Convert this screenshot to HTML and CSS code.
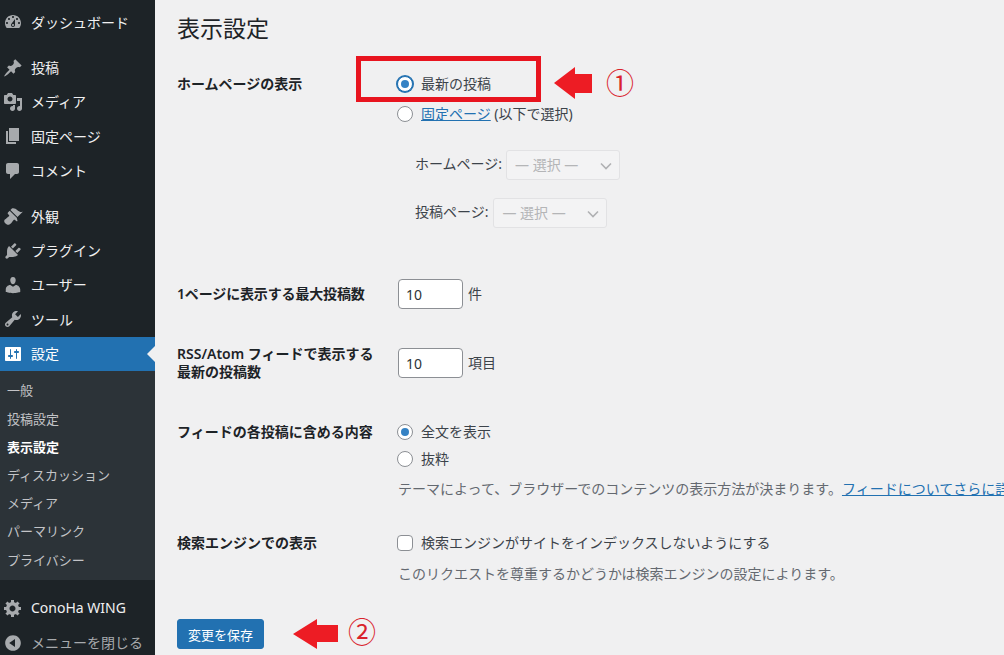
FILE: index.html
```html
<!DOCTYPE html>
<html lang="ja">
<head>
<meta charset="utf-8">
<title>表示設定</title>
<link rel="stylesheet" href="styles.css">
</head>
<body>
<div class="page">
  <nav class="side">
    <ul class="menu first">
      <li><svg viewBox="0 0 20 20"><path d="M3.76 16h12.48c1.1-1.37 1.76-3.11 1.76-5 0-4.42-3.58-8-8-8s-8 3.58-8 8c0 1.89.66 3.63 1.76 5zM10 4c.55 0 1 .45 1 1s-.45 1-1 1-1-.45-1-1 .45-1 1-1zM6 6c.55 0 1 .45 1 1s-.45 1-1 1-1-.45-1-1 .45-1 1-1zm8 0c.55 0 1 .45 1 1s-.45 1-1 1-1-.45-1-1 .45-1 1-1zm-5.37 5.55L12 7v6c0 1.1-.9 2-2 2s-2-.9-2-2c0-.57.24-1.08.63-1.45zM4 10c.55 0 1 .45 1 1s-.45 1-1 1-1-.45-1-1 .45-1 1-1zm12 0c.55 0 1 .45 1 1s-.45 1-1 1-1-.45-1-1 .45-1 1-1zm-5 3c0-.55-.45-1-1-1s-1 .45-1 1 .45 1 1 1 1-.45 1-1z"/></svg><span>ダッシュボード</span></li>
    </ul>
    <ul class="menu">
      <li><svg viewBox="0 0 20 20"><path d="M10.44 3.02l1.82-1.82 6.36 6.35-1.83 1.82c-1.05-.68-2.48-.57-3.41.36l-.75.75c-.92.93-1.04 2.35-.35 3.41l-1.83 1.82-2.41-2.41-2.8 2.79c-.42.42-3.38 2.71-3.8 2.29s1.86-3.39 2.28-3.81l2.79-2.79L4.1 9.36l1.83-1.82c1.05.69 2.48.57 3.4-.36l.75-.75c.93-.92 1.05-2.35.36-3.41z"/></svg><span>投稿</span></li>
      <li><svg viewBox="0 0 20 20"><path d="M13 11V4c0-.55-.45-1-1-1h-1.67L9 1H5L3.67 3H2c-.55 0-1 .45-1 1v7c0 .55.45 1 1 1h10c.55 0 1-.45 1-1zM7 4.5c1.38 0 2.5 1.12 2.5 2.5S8.38 9.5 7 9.5 4.5 8.38 4.5 7 5.62 4.5 7 4.5zM14 6h5v10.5c0 1.38-1.12 2.5-2.5 2.5S14 17.88 14 16.5s1.12-2.5 2.5-2.5c.17 0 .34.02.5.05V9h-3V6zm-4 8.05V13h2v3.5c0 1.38-1.12 2.5-2.5 2.5S7 17.88 7 16.5 8.12 14 9.5 14c.17 0 .34.02.5.05z"/></svg><span>メディア</span></li>
      <li><svg viewBox="0 0 20 20"><path d="M6 15V2h10v13H6zm-1 1h8v2H3V5h2v11z"/></svg><span>固定ページ</span></li>
      <li><svg viewBox="0 0 20 20"><path d="M5 2h9c1.1 0 2 .9 2 2v7c0 1.1-.9 2-2 2h-2l-5 5v-5H5c-1.1 0-2-.9-2-2V4c0-1.1.9-2 2-2z"/></svg><span>コメント</span></li>
    </ul>
    <ul class="menu">
      <li><svg viewBox="0 0 20 20"><path d="M14.48 11.06L7.41 3.99l1.5-1.5c.5-.56 2.3-.47 3.51.32 1.21.8 1.43 1.28 2.91 2.1 1.18.64 2.45 1.26 4.45.85zm-.71.71L6.7 4.7 4.93 6.47c-.39.39-.39 1.02 0 1.41l1.06 1.06c.39.39.39 1.03 0 1.42-.6.6-1.43 1.11-2.21 1.69-.35.26-.7.53-1.01.84C1.43 13.23.28 15.09 2.5 17.5c2.41 2.22 4.27 1.07 5.61-.27.31-.31.58-.66.84-1.01.58-.78 1.09-1.61 1.69-2.21.39-.39 1.03-.39 1.42 0l1.06 1.06c.39.39 1.02.39 1.41 0z"/></svg><span>外観</span></li>
      <li><svg viewBox="0 0 20 20"><path d="M13.11 4.36L9.87 7.6 8 5.73l3.24-3.24c.35-.34 1.05-.2 1.56.32.52.51.66 1.21.31 1.55zm-8 1.77l.91-1.12 9.01 9.01-1.19.84c-.71.71-2.63 1.16-3.82 1.16H6.14L4.9 17.26c-.59.59-1.54.59-2.12 0-.59-.58-.59-1.53 0-2.12l1.24-1.24v-3.88c0-1.13.4-3.19 1.09-3.89zm7.26 3.97l3.24-3.24c.34-.35 1.04-.21 1.55.31.52.51.66 1.21.31 1.55l-3.24 3.25z"/></svg><span>プラグイン</span></li>
      <li><svg viewBox="0 0 20 20"><path d="M10 9.25c-2.27 0-2.73-3.44-2.73-3.44C7 4.02 7.82 2 9.97 2c2.16 0 2.98 2.02 2.71 3.81 0 0-.41 3.44-2.68 3.44zm0 2.57L12.72 10c2.39 0 4.52 2.33 4.52 4.53v2.49s-3.65 1.13-7.24 1.13c-3.65 0-7.24-1.13-7.24-1.13v-2.49c0-2.25 1.94-4.48 4.47-4.48z"/></svg><span>ユーザー</span></li>
      <li><svg viewBox="0 0 20 20"><path d="M16.68 9.77c-1.34 1.34-3.3 1.67-4.95.99l-5.41 6.52c-.99.99-2.59.99-3.58 0s-.99-2.59 0-3.57l6.52-5.42c-.68-1.65-.35-3.61.99-4.95 1.28-1.28 3.12-1.62 4.72-1.06l-2.89 2.89 2.82 2.82 2.86-2.87c.53 1.58.18 3.39-1.08 4.65zM3.81 16.21c.4.39 1.04.39 1.43 0 .4-.4.4-1.04 0-1.43-.39-.4-1.03-.4-1.43 0-.39.39-.39 1.03 0 1.43z"/></svg><span>ツール</span></li>
      <li class="active"><svg viewBox="0 0 20 20"><path d="M18 16V4c0-.55-.45-1-1-1H3c-.55 0-1 .45-1 1v12c0 .55.45 1 1 1h14c.55 0 1-.45 1-1zM8 11h1c.55 0 1 .45 1 1s-.45 1-1 1H8v1.5c0 .28-.22.5-.5.5s-.5-.22-.5-.5V13H6c-.55 0-1-.45-1-1s.45-1 1-1h1V5.5c0-.28.22-.5.5-.5s.5.22.5.5V11zm5-2h-1c-.55 0-1-.45-1-1s.45-1 1-1h1V5.5c0-.28.22-.5.5-.5s.5.22.5.5V7h1c.55 0 1 .45 1 1s-.45 1-1 1h-1v5.5c0 .28-.22.5-.5.5s-.5-.22-.5-.5V9z"/></svg><span>設定</span></li>
    </ul>
    <ul class="sub">
      <li>一般</li>
      <li>投稿設定</li>
      <li class="current">表示設定</li>
      <li>ディスカッション</li>
      <li>メディア</li>
      <li>パーマリンク</li>
      <li>プライバシー</li>
    </ul>
    <ul class="menu lower">
      <li><svg viewBox="0 0 20 20"><path d="M18 12h-2.18c-.17.7-.44 1.35-.81 1.93l1.54 1.54-2.1 2.1-1.54-1.54c-.58.36-1.23.63-1.91.79V19H8v-2.18c-.68-.16-1.33-.43-1.91-.79l-1.54 1.54-2.12-2.12 1.54-1.54c-.36-.58-.63-1.23-.79-1.91H1V9.03h2.17c.16-.7.44-1.35.8-1.94L2.43 5.55l2.1-2.1 1.54 1.54c.58-.37 1.24-.64 1.93-.81V2h3v2.18c.68.16 1.33.43 1.91.79l1.54-1.54 2.12 2.12-1.54 1.54c.36.59.64 1.24.8 1.94H18V12zm-8.5 1.5c1.66 0 3-1.34 3-3s-1.34-3-3-3-3 1.34-3 3 1.34 3 3 3z"/></svg><span>ConoHa WING</span></li>
      <li class="collapse"><svg viewBox="0 0 20 20"><path d="M10 2.16c4.33 0 7.84 3.51 7.84 7.84s-3.51 7.84-7.84 7.84S2.16 14.33 2.16 10 5.71 2.16 10 2.16zm2 11.72V6.12L6.18 9.97z"/></svg><span>メニューを閉じる</span></li>
    </ul>
  </nav>

  <main class="main">
    <h1 class="title">表示設定</h1>

    <section class="row row-home">
      <div class="th">ホームページの表示</div>
      <div class="td">
        <label class="choice"><input type="radio" name="front" class="focus" checked>最新の投稿</label>
        <label class="choice"><input type="radio" name="front"><span><a href="#" class="link">固定ページ</a> (以下で選択)</span></label>
        <div class="picks">
          <label class="pick">ホームページ:<select disabled class="sel"><option>— 選択 —</option></select></label>
          <label class="pick">投稿ページ:<select disabled class="sel"><option>— 選択 —</option></select></label>
        </div>
      </div>
    </section>

    <section class="row row-num">
      <div class="th">1ページに表示する最大投稿数</div>
      <div class="td inline"><input type="text" class="num" value="10">件</div>
    </section>

    <section class="row row-rss">
      <div class="th">RSS/Atom フィードで表示する<br>最新の投稿数</div>
      <div class="td inline"><input type="text" class="num" value="10">項目</div>
    </section>

    <section class="row row-feed">
      <div class="th">フィードの各投稿に含める内容</div>
      <div class="td">
        <label class="choice tight"><input type="radio" name="feed" checked>全文を表示</label>
        <label class="choice tight"><input type="radio" name="feed">抜粋</label>
        <p class="desc">テーマによって、ブラウザーでのコンテンツの表示方法が決まります。<a href="#" class="link">フィードについてさらに詳しく</a></p>
      </div>
    </section>

    <section class="row row-search">
      <div class="th">検索エンジンでの表示</div>
      <div class="td">
        <label class="choice"><input type="checkbox" class="check">検索エンジンがサイトをインデックスしないようにする</label>
        <p class="desc desc-search">このリクエストを尊重するかどうかは検索エンジンの設定によります。</p>
      </div>
    </section>

    <button type="button" class="save">変更を保存</button>
  </main>

  <div class="callout"></div>
  <svg class="arrow arrow-one" viewBox="0 0 39 32"><path d="M0 16 21 0V7H38V26H21V32Z"/></svg>
  <span class="mark mark-one">①</span>
  <svg class="arrow arrow-two" viewBox="0 0 45 30"><path d="M0 15 24 0V6H45V23H24V30Z"/></svg>
  <span class="mark mark-two">②</span>
</div>
</body>
</html>
```
FILE: styles.css
```css
* { box-sizing: border-box; }
html, body { margin: 0; height: 100%; overflow: hidden; }
body {
  background: #f0f0f1;
  color: #3c434a;
  font-family: "Noto Sans", "Noto Sans CJK JP", sans-serif;
  font-size: 14px;
}
ul { list-style: none; margin: 0; padding: 0; }

.page { position: relative; display: flex; width: 1004px; height: 655px; overflow: hidden; }

/* sidebar */
.side { flex: 0 0 155px; width: 155px; height: 655px; background: #1d2327; padding-top: 5.5px; }
.menu { margin-bottom: 11px; }
.menu li {
  position: relative;
  display: flex;
  align-items: center;
  height: 34.4px;
  padding-left: 3px;
  color: #f0f0f1;
  font-size: 14px;
  white-space: nowrap;
}
.menu span { margin-bottom: 2px; }
.menu svg { flex: 0 0 20px; width: 20px; height: 20px; margin-right: 8px; margin-bottom: 1px; fill: #a7aaad; }
.menu li.active { background: #2271b1; color: #fff; }
.menu li.active svg { fill: #fff; }
.menu li.active::after {
  content: "";
  position: absolute;
  right: 0;
  top: 50%;
  margin-top: -8px;
  border: 8px solid transparent;
  border-right-color: #f0f0f1;
  border-left: 0;
}
.sub { background: #2c3338; padding: 6px 0 5px; margin-top: -11px; }
.sub li {
  height: 28.2px;
  line-height: 26px;
  padding-left: 7px;
  color: #c3c4c7;
  font-size: 13px;
  white-space: nowrap;
}
.sub li.current { color: #fff; font-weight: 600; }
.lower { padding-top: 12px; margin: 0; }
.lower li.collapse { color: #a7aaad; height: 34px; }

/* main column */
.main { flex: 1 1 auto; min-width: 0; padding-left: 22px; white-space: nowrap; }
.title { margin: 12px 0 0; height: 33px; font-size: 23px; font-weight: 400; line-height: 33px; color: #1d2327; }

.row { display: flex; align-items: flex-start; }
.th { flex: 0 0 221px; width: 221px; font-size: 14px; font-weight: 600; line-height: 18px; color: #1d2327; }
.td { flex: 0 0 auto; line-height: 20px; }
.inline { display: flex; align-items: center; gap: 5px; }

.row-home { margin-top: 30px; }
.row-num { margin-top: 52px; }
.row-num .th { padding-top: 6px; letter-spacing: -0.15px; }
.row-rss { margin-top: 39px; }
.row-rss .th { margin-top: -3px; }
.row-feed { margin-top: 42px; }
.row-search { margin-top: 35px; }

.choice { display: flex; align-items: center; height: 30px; gap: 8px; margin: -6px 0 0 -1px; }
.choice + .choice { margin-top: 0; }
.choice.tight + .choice.tight { margin-top: -3px; }

input[type="radio"], .check {
  appearance: none;
  flex: 0 0 16px;
  width: 16px;
  height: 16px;
  margin: 0;
  background: #fff;
  border: 1px solid #8c8f94;
  position: relative;
}
input[type="radio"] { border-radius: 50%; }
.check { border-radius: 4px; }
input[type="radio"]:checked::before {
  content: "";
  position: absolute;
  left: 3px;
  top: 3px;
  width: 8px;
  height: 8px;
  border-radius: 50%;
  background: #3582c4;
}
input.focus { border-color: #2271b1; box-shadow: 0 0 0 1px #2271b1; }

.link { color: #2271b1; text-decoration: underline; }

.picks { display: flex; flex-direction: column; gap: 18px; margin: 20px 0 0 17px; }
.pick { display: flex; align-items: center; gap: 4px; height: 30px; }
.sel {
  appearance: none;
  width: 114px;
  height: 30px;
  margin: 1px 0 0;
  padding: 0 24px 0 8px;
  font: inherit;
  color: #b4b5b7;
  background: #f3f3f4 url("data:image/svg+xml;utf8,<svg xmlns='http://www.w3.org/2000/svg' width='16' height='16'><path d='M3 5.5l5 5 5-5' fill='none' stroke='%23b0b1b3' stroke-width='1.6'/></svg>") no-repeat right 5px top 7px / 16px 16px;
  border: 1px solid #e2e2e4;
  border-radius: 3px;
  opacity: 1;
}
.pick + .pick .sel { margin-left: 1px; }

.num {
  width: 65px;
  height: 30px;
  padding: 0 7px;
  font: inherit;
  color: #2c3338;
  background: #fff;
  border: 1px solid #8c8f94;
  border-radius: 4px;
}

.desc { margin: 5px 0 0; line-height: 20px; color: #646970; }
.desc-search { margin-top: 6px; }

.save {
  display: block;
  margin-top: 35px;
  width: 87px;
  height: 30px;
  padding: 0;
  font: inherit;
  font-size: 13px;
  color: #fff;
  background: #2271b1;
  border: 1px solid #2271b1;
  border-radius: 3px;
}

/* annotations laid over the page */
.callout { position: absolute; left: 356px; top: 56px; width: 185px; height: 46px; border: 5px solid #e8141f; }
.arrow { position: absolute; fill: #ed1c24; }
.arrow-one { left: 554px; top: 67px; width: 39px; height: 32px; }
.arrow-two { left: 293px; top: 619px; width: 45px; height: 30px; }
.mark { position: absolute; color: #d9232c; font-family: "Noto Sans CJK JP", sans-serif; font-size: 28px; line-height: 32px; }
.mark-one { left: 606px; top: 66px; }
.mark-two { left: 348px; top: 615px; }
```
